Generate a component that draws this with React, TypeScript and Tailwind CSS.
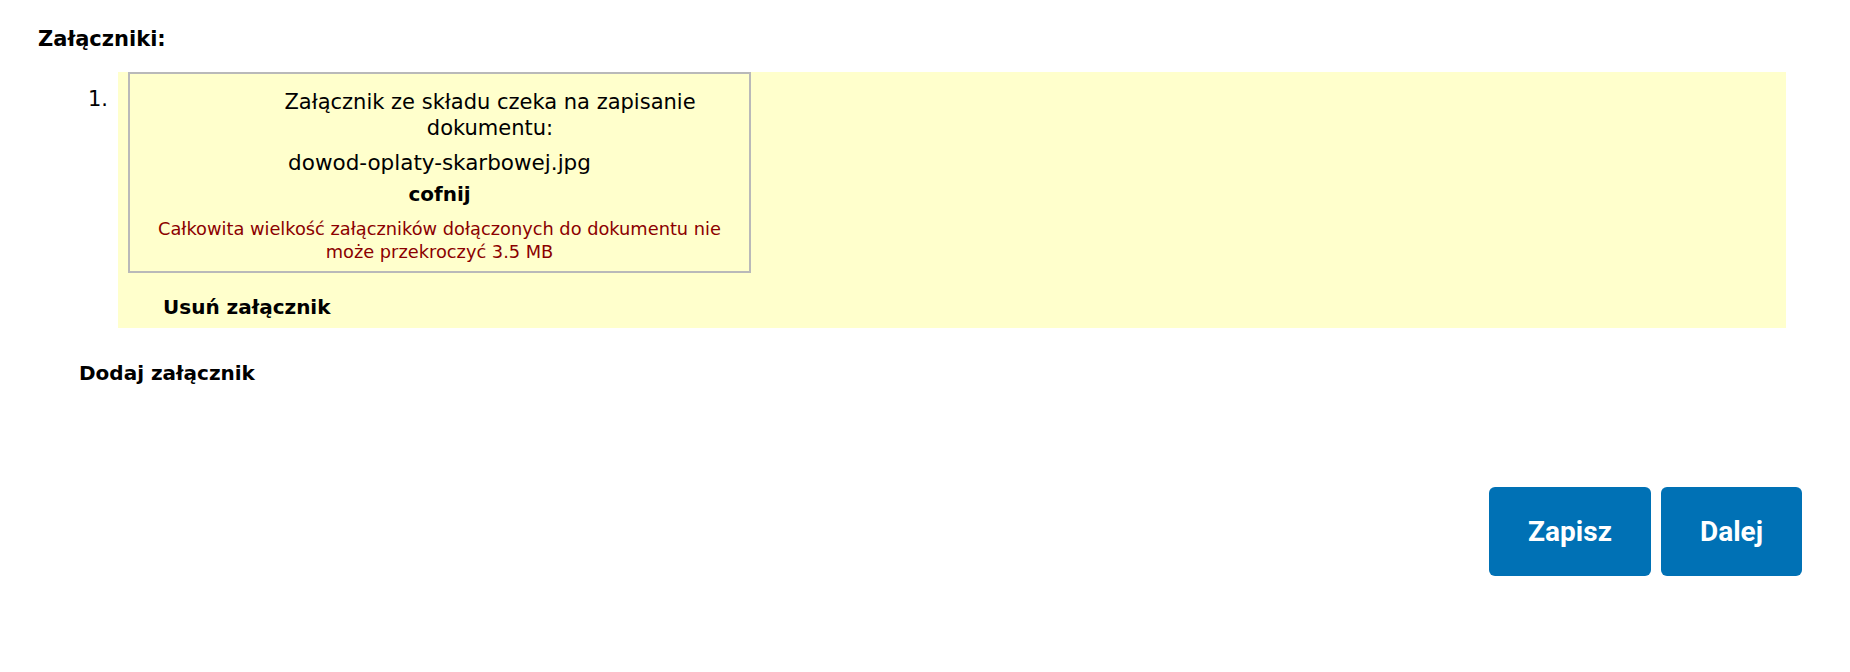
import React from "react";

export default function App() {
  return (
    <div className="w-[1850px] h-[672px] bg-white text-black font-['DejaVu_Sans',_Verdana,_sans-serif]">
      <div className="pt-[27px] pl-[38px] text-[21px] leading-[24px] font-bold">Załączniki:</div>

      <div className="flex mt-[21px]">
        <div className="w-[118px] shrink-0 text-right pr-[10px] pt-[15px] text-[21px] leading-[24px]">1.</div>
        <div className="flex-1 mr-[64px] bg-[#ffffcc] pl-[10px] pb-[9px]">
          <div className="w-[623px] border-2 border-[#b9b9b9] pt-[15px] pb-[8px]">
            <div className="ml-[101px] text-center text-[21px] leading-[26px]">
              Załącznik ze składu czeka na zapisanie dokumentu:
            </div>
            <div className="mt-[9px] text-center text-[21.5px] leading-[26px]">dowod-oplaty-skarbowej.jpg</div>
            <div className="mt-[5px] text-center text-[20px] leading-[26px] font-bold">cofnij</div>
            <div className="mt-[10px] px-[14px] text-center text-[17.8px] leading-[23px] text-[#8b0000]">
              Całkowita wielkość załączników dołączonych do dokumentu nie może przekroczyć 3.5 MB
            </div>
          </div>
          <div className="mt-[22px] ml-[35px] text-[20px] leading-[24px] font-bold">Usuń załącznik</div>
        </div>
      </div>

      <div className="mt-[33px] pl-[79px] text-[20px] leading-[24px] font-bold">Dodaj załącznik</div>

      <div className="mt-[102px] pr-[48px] flex justify-end gap-[10px] font-['Roboto',_sans-serif]">
        <button className="w-[162px] h-[89px] rounded-[6px] bg-[#0071b5] text-white text-[28px] font-bold">Zapisz</button>
        <button className="w-[141px] h-[89px] rounded-[6px] bg-[#0071b5] text-white text-[28px] font-bold">Dalej</button>
      </div>
    </div>
  );
}
